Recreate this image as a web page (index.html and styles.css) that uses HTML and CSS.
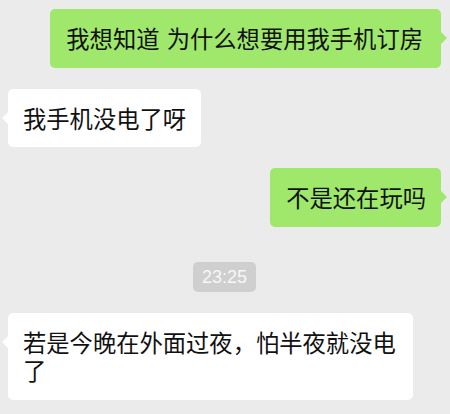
FILE: index.html
```html
<!DOCTYPE html>
<html lang="zh-CN">
<head>
    <meta charset="UTF-8">
    <meta name="viewport" content="width=device-width, initial-scale=1.0">
    <title>聊天记录</title>
    <link rel="stylesheet" href="styles.css">
</head>
<body>
    <div class="chat">
        <!-- sent -->
        <div class="row row-right">
            <div class="bubble bubble-me wide-space">我想知道 为什么想要用我手机订房</div>
        </div>

        <!-- received -->
        <div class="row row-left">
            <div class="bubble bubble-other">我手机没电了呀</div>
        </div>

        <div class="row row-right">
            <div class="bubble bubble-me">不是还在玩吗</div>
        </div>

        <!-- time divider -->
        <div class="time-row">
            <span class="time">23:25</span>
        </div>

        <div class="row row-left">
            <div class="bubble bubble-other">若是今晚在外面过夜，怕半夜就没电了</div>
        </div>
    </div>
</body>
</html>
```

FILE: styles.css
```css
/* Reset */
* {
    margin: 0;
    padding: 0;
    box-sizing: border-box;
}

body, html {
    height: 100%;
    font-family: "Noto Sans CJK SC", "Noto Sans", sans-serif;
}

body {
    background-color: #ebebeb;
    overflow: hidden;
}

/* Chat column */
.chat {
    display: flex;
    flex-direction: column;
    gap: 21px;
    padding: 9px 9px 0 8px;
}

.row {
    display: flex;
}

.row-right {
    justify-content: flex-end;
}

.row-left {
    justify-content: flex-start;
}

/* Bubbles */
.bubble {
    position: relative;
    max-width: 405px;
    padding: 15px 15px 15px 15px;
    border-radius: 5px;
    font-size: 23.3px;
    line-height: 28.5px;
    color: #111;
}

.bubble-me {
    background-color: #9fe86b;
    padding-left: 16px;
}

.wide-space {
    word-spacing: 2px;
    padding-right: 18px;
}

.bubble-other {
    background-color: #fff;
}

/* Tails */
.bubble::after {
    content: "";
    position: absolute;
    top: 23px;
    width: 0;
    height: 0;
    border-top: 6px solid transparent;
    border-bottom: 6px solid transparent;
}

.bubble-me::after {
    right: -6px;
    border-left: 6px solid #9fe86b;
}

.bubble-other::after {
    left: -6px;
    border-right: 6px solid #fff;
}

/* Timestamp */
.time-row {
    display: flex;
    justify-content: center;
    margin-top: 14px;
}

.time {
    height: 30px;
    line-height: 30px;
    padding: 0 9px;
    border-radius: 5px;
    background-color: #cfcfcf;
    color: #f7f7f7;
    font-family: "Liberation Sans", Arial, sans-serif;
    font-size: 18px;
}
```
